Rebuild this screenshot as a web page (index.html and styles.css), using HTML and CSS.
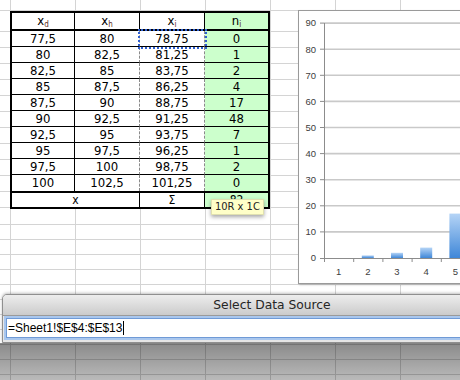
FILE: index.html
```html
<!DOCTYPE html>
<html lang="en">
<head>
    <meta charset="UTF-8">
    <title>Select Data Source</title>
    <link rel="stylesheet" href="styles.css">
</head>
<body>
    <div class="sheet">
        <!-- frequency table -->
        <table class="data">
            <colgroup>
                <col class="c1"><col class="c2"><col class="c3"><col class="c4">
            </colgroup>
            <thead>
                <tr>
                    <th>x<sub>d</sub></th>
                    <th>x<sub>h</sub></th>
                    <th>x<sub>i</sub></th>
                    <th class="n">n<sub>i</sub></th>
                </tr>
            </thead>
            <tbody>
                <tr><td>77,5</td><td class="xh">80</td><td class="xi active">78,75</td><td class="n">0</td></tr>
                <tr><td>80</td><td class="xh">82,5</td><td class="xi">81,25</td><td class="n">1</td></tr>
                <tr><td>82,5</td><td class="xh">85</td><td class="xi">83,75</td><td class="n">2</td></tr>
                <tr><td>85</td><td class="xh">87,5</td><td class="xi">86,25</td><td class="n">4</td></tr>
                <tr><td>87,5</td><td class="xh">90</td><td class="xi">88,75</td><td class="n">17</td></tr>
                <tr><td>90</td><td class="xh">92,5</td><td class="xi">91,25</td><td class="n">48</td></tr>
                <tr><td>92,5</td><td class="xh">95</td><td class="xi">93,75</td><td class="n">7</td></tr>
                <tr><td>95</td><td class="xh">97,5</td><td class="xi">96,25</td><td class="n">1</td></tr>
                <tr><td>97,5</td><td class="xh">100</td><td class="xi">98,75</td><td class="n">2</td></tr>
                <tr><td>100</td><td class="xh">102,5</td><td class="xi">101,25</td><td class="n">0</td></tr>
            </tbody>
            <tfoot>
                <tr><td colspan="2">x</td><td>Σ</td><td class="n">82</td></tr>
            </tfoot>
        </table>

        <div class="tip">10R x 1C</div>

        <!-- column chart -->
        <div class="chart">
            <svg width="200" height="272" viewBox="0 0 200 272">
                <defs>
                    <linearGradient id="bar" x1="0" y1="0" x2="0" y2="1">
                        <stop offset="0" stop-color="#b5d4f6"/>
                        <stop offset="1" stop-color="#3f87d8"/>
                    </linearGradient>
                </defs>
                <g stroke="#c9c9c9" stroke-width="1.6">
                    <line x1="25" y1="12.1" x2="200" y2="12.1"/>
                    <line x1="25" y1="38.2" x2="200" y2="38.2"/>
                    <line x1="25" y1="64.3" x2="200" y2="64.3"/>
                    <line x1="25" y1="90.4" x2="200" y2="90.4"/>
                    <line x1="25" y1="116.5" x2="200" y2="116.5"/>
                    <line x1="25" y1="142.6" x2="200" y2="142.6"/>
                    <line x1="25" y1="168.7" x2="200" y2="168.7"/>
                    <line x1="25" y1="194.8" x2="200" y2="194.8"/>
                    <line x1="25" y1="220.9" x2="200" y2="220.9"/>
                </g>
                <g fill="url(#bar)">
                    <rect x="62.8" y="244.4" width="12" height="2.6"/>
                    <rect x="92" y="241.8" width="12" height="5.2"/>
                    <rect x="121.2" y="236.6" width="12" height="10.4"/>
                    <rect x="150.4" y="202.6" width="12" height="44.4"/>
                </g>
                <g stroke="#8c8c8c" stroke-width="1">
                    <line x1="25.5" y1="12" x2="25.5" y2="247"/>
                    <line x1="21" y1="247.5" x2="200" y2="247.5"/>
                    <line x1="21" y1="12.1" x2="25" y2="12.1"/>
                    <line x1="21" y1="38.2" x2="25" y2="38.2"/>
                    <line x1="21" y1="64.3" x2="25" y2="64.3"/>
                    <line x1="21" y1="90.4" x2="25" y2="90.4"/>
                    <line x1="21" y1="116.5" x2="25" y2="116.5"/>
                    <line x1="21" y1="142.6" x2="25" y2="142.6"/>
                    <line x1="21" y1="168.7" x2="25" y2="168.7"/>
                    <line x1="21" y1="194.8" x2="25" y2="194.8"/>
                    <line x1="21" y1="220.9" x2="25" y2="220.9"/>
                    <line x1="25.5" y1="247" x2="25.5" y2="251"/>
                    <line x1="54.7" y1="247" x2="54.7" y2="251"/>
                    <line x1="83.9" y1="247" x2="83.9" y2="251"/>
                    <line x1="113.1" y1="247" x2="113.1" y2="251"/>
                    <line x1="142.3" y1="247" x2="142.3" y2="251"/>
                    <line x1="171.5" y1="247" x2="171.5" y2="251"/>
                </g>
                <g class="axis-y" text-anchor="end">
                    <text x="17" y="15.4">90</text>
                    <text x="17" y="41.5">80</text>
                    <text x="17" y="67.6">70</text>
                    <text x="17" y="93.7">60</text>
                    <text x="17" y="119.8">50</text>
                    <text x="17" y="145.9">40</text>
                    <text x="17" y="172">30</text>
                    <text x="17" y="198.1">20</text>
                    <text x="17" y="224.2">10</text>
                    <text x="17" y="250.3">0</text>
                </g>
                <g class="axis-x" text-anchor="middle">
                    <text x="39.6" y="263.5">1</text>
                    <text x="68.8" y="263.5">2</text>
                    <text x="98" y="263.5">3</text>
                    <text x="127.2" y="263.5">4</text>
                    <text x="156.4" y="263.5">5</text>
                </g>
            </svg>
        </div>

        <div class="shade"></div>

        <!-- range picker sheet -->
        <div class="dialog">
            <div class="dialog-title">Select Data Source</div>
            <div class="dialog-body">
                <div class="range-field">=Sheet1!$E$4:$E$13<span class="caret"></span></div>
            </div>
        </div>
    </div>
</body>
</html>
```

FILE: styles.css
```css
body {
    margin: 0;
    font-family: "DejaVu Sans Condensed", "Liberation Sans", sans-serif;
}

.sheet {
    position: relative;
    width: 460px;
    height: 380px;
    overflow: hidden;
    box-sizing: border-box;
    padding: 11px 0 0 10px;
    background-color: #fff;
    background-image:
        linear-gradient(to right, #d4d4d4 1px, transparent 1px),
        linear-gradient(#d4d4d4, #d4d4d4),
        repeating-linear-gradient(to bottom, #d4d4d4 0 1px, transparent 1px 16px),
        repeating-linear-gradient(to bottom, #d4d4d4 0 1px, transparent 1px 15px);
    background-size: 65px 100%, 100% 1px, 100% 177px, 100% 200px;
    background-position: 10px 0, 0 10px, 0 31px, 0 224px;
    background-repeat: repeat-x, no-repeat, no-repeat, no-repeat;
}

.data {
    border-collapse: separate;
    border-spacing: 0;
    border: 2px solid #000;
    table-layout: fixed;
    width: 260px;
    background: #fff;
    font-size: 13px;
    color: #000;
}

.c1 { width: 63px; }
.c2 { width: 65px; }
.c3 { width: 65px; }
.c4 { width: 63px; }

.data th,
.data td {
    padding: 0;
    text-align: center;
    font-weight: normal;
    border-right: 1px solid #000;
    border-bottom: 1px solid #000;
    line-height: 14px;
}

.data th:last-child,
.data td:last-child {
    border-right: none;
}

.data thead tr { height: 18px; }
.data tbody tr { height: 16px; }
.data tfoot tr { height: 16px; }

.data th {
    border-bottom-width: 2px;
    font-size: 13px;
}

.data sub {
    font-size: 8px;
    color: #5a2a20;
    vertical-align: -2px;
    line-height: 0;
}

.data tbody tr:last-child td { border-bottom: none; }

.data tfoot td {
    border-top: 2px solid #000;
    border-bottom: none;
    font-size: 12px;
}

.data .n { background: #ccffcc; }

.data tbody .xh,
.data tbody .xi {
    border-right: 1px dashed #8a8a8a;
}

.data .active {
    outline: 2px dotted #2f5fd0;
    outline-offset: 0;
}

.tip {
    position: absolute;
    left: 211px;
    top: 199px;
    height: 14px;
    padding: 0 3px;
    line-height: 14px;
    font-size: 11px;
    color: #222;
    background: #ffffc8;
    border: 1px solid #e0e0b0;
    box-shadow: 0 2px 4px rgba(0, 0, 0, 0.35);
}

.chart {
    position: absolute;
    left: 298px;
    top: 10px;
    width: 200px;
    height: 272px;
    background: #fff;
    border: 1px solid #9a9a9a;
    box-shadow: 1px 1px 2px rgba(0, 0, 0, 0.2);
}

.chart svg {
    display: block;
    font-family: "Liberation Sans", sans-serif;
    font-size: 9.5px;
    fill: #404040;
}

.shade {
    position: absolute;
    left: 0;
    top: 343px;
    width: 460px;
    height: 37px;
    background: linear-gradient(rgba(0, 0, 0, 0.46), rgba(0, 0, 0, 0.27));
}

.dialog {
    position: absolute;
    left: 2px;
    top: 294px;
    width: 540px;
    box-sizing: border-box;
    background: #e6e6e6;
    border: 1px solid #8f8f8f;
    border-radius: 5px 5px 0 0;
    box-shadow: 0 -1px 3px rgba(0, 0, 0, 0.25);
}

.dialog-title {
    height: 20px;
    line-height: 20px;
    text-align: center;
    font-family: "DejaVu Sans", sans-serif;
    font-size: 12.3px;
    color: #262626;
    background: linear-gradient(#ededed, #cbcbcb);
    border-bottom: 1px solid #9a9a9a;
    border-radius: 4px 4px 0 0;
}

.dialog-body {
    height: 26px;
    padding: 2px 0 0 3px;
    box-sizing: border-box;
}

.range-field {
    height: 20px;
    box-sizing: border-box;
    padding-left: 1px;
    background: #fff;
    border: 1px solid #6f9ad6;
    box-shadow: 0 0 0 2px #a9c7ee;
    font-family: "Liberation Sans", sans-serif;
    font-size: 12px;
    line-height: 18px;
    color: #000;
}

.caret {
    display: inline-block;
    width: 1px;
    height: 14px;
    margin-left: 1px;
    vertical-align: -3px;
    background: #000;
}
```
